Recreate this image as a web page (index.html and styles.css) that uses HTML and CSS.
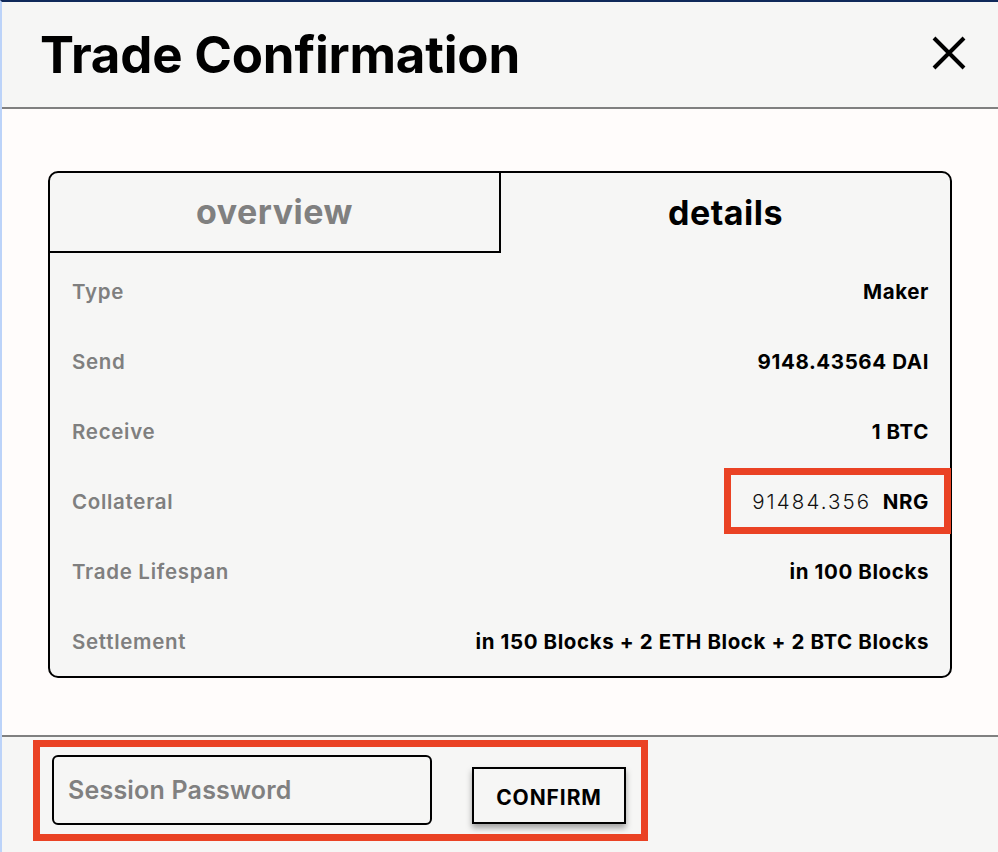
FILE: index.html
```html
<!DOCTYPE html>
<html lang="en">
<head>
<meta charset="utf-8">
<title>Trade Confirmation</title>
<link rel="stylesheet" href="styles.css">
</head>
<body>
<div class="modal">
  <header class="modal-header">
    <h1 class="title">Trade Confirmation</h1>
    <button class="close" aria-label="Close">
      <svg width="34" height="34" viewBox="0 0 34 34"><path d="M2 2 L32 32 M32 2 L2 32" stroke="#000" stroke-width="4" fill="none"/></svg>
    </button>
  </header>
  <main class="modal-body">
    <section class="card">
      <div class="tabs">
        <div class="tab inactive">overview</div>
        <div class="tab active">details</div>
      </div>
      <div class="rows">
        <div class="row"><span class="label">Type</span><span class="value">Maker</span></div>
        <div class="row"><span class="label">Send</span><span class="value">9148.43564 DAI</span></div>
        <div class="row"><span class="label">Receive</span><span class="value">1 BTC</span></div>
        <div class="row"><span class="label">Collateral</span><span class="value collateral"><span class="light">91484.356</span> NRG<span class="mark mark-collateral"></span></span></div>
        <div class="row"><span class="label">Trade Lifespan</span><span class="value">in 100 Blocks</span></div>
        <div class="row"><span class="label">Settlement</span><span class="value">in 150 Blocks + 2 ETH Block + 2 BTC Blocks</span></div>
      </div>
    </section>
  </main>
  <footer class="modal-footer">
    <div class="form">
      <input class="password" type="password" placeholder="Session Password">
      <button class="confirm">CONFIRM</button>
      <span class="mark mark-form"></span>
    </div>
  </footer>
</div>
</body>
</html>
```
FILE: styles.css
```css
* { box-sizing: border-box; }
html, body { margin: 0; padding: 0; }
body {
  width: 998px;
  height: 852px;
  overflow: hidden;
  font-family: "Inter", "Noto Sans", sans-serif;
  background: #fffcfb;
}
.modal {
  height: 852px;
  border-top: 2px solid #10295a;
  border-left: 2px solid #bcd3f9;
  display: flex;
  flex-direction: column;
}
.modal-header {
  height: 107px;
  flex: none;
  background: #f6f6f5;
  border-bottom: 2px solid #808080;
  display: flex;
  align-items: center;
  justify-content: space-between;
  padding: 0 32px 0 38px;
}
.title {
  margin: 0;
  font-size: 51px;
  font-weight: 700;
  color: #000;
  letter-spacing: -0.2px;
}
.close {
  background: none;
  border: 0;
  padding: 0;
  width: 34px;
  height: 34px;
  display: flex;
  margin-bottom: 3px;
}
.modal-body {
  flex: 1;
  background: #fffcfb;
  padding: 62px 46px 0 46px;
}
.card {
  border: 2px solid #000;
  border-radius: 10px;
  background: #f6f6f5;
}
.tabs {
  display: flex;
  height: 80px;
}
.tab {
  flex: 1;
  display: flex;
  align-items: center;
  justify-content: center;
  font-size: 34px;
  font-weight: 700;
  letter-spacing: 0.5px;
  padding-bottom: 2px;
}
.tab.inactive {
  color: #808080;
  border-right: 2px solid #000;
  border-bottom: 2px solid #000;
  border-top-left-radius: 8px;
}
.tab.active { color: #000; }
.rows { padding-top: 3px; }
.row {
  height: 70px;
  display: flex;
  align-items: center;
  justify-content: space-between;
  padding: 0 21px 0 22px;
  font-size: 20.5px;
  font-weight: 700;
  letter-spacing: 0.6px;
}
.label { color: #7f7f7f; font-weight: 600; letter-spacing: 0.7px; }
.value { color: #000; }
.collateral { position: relative; }
.light { font-weight: 300; color: #111; letter-spacing: 2.1px; margin-right: 6px; }
.mark {
  position: absolute;
  border: 7px solid #ea4224;
  pointer-events: none;
}
.mark-collateral {
  left: -28px;
  right: -22px;
  top: -21px;
  bottom: -20px;
}
.modal-footer {
  height: 117px;
  flex: none;
  background: #f6f6f5;
  border-top: 2px solid #808080;
  padding: 18px 0 0 50px;
}
.form {
  position: relative;
  display: flex;
  align-items: flex-start;
  width: 574px;
}
.password {
  width: 380px;
  height: 70px;
  border: 2px solid #000;
  border-radius: 6px;
  background: #f6f6f5;
  padding: 0 14px;
  font-family: inherit;
  font-size: 25px;
  font-weight: 600;
  letter-spacing: 0.2px;
  outline: none;
}
.password::placeholder { color: #808080; opacity: 1; }
.confirm {
  margin: 12px 0 0 40px;
  width: 155px;
  height: 57px;
  border: 2px solid #000;
  background: #f6f6f5;
  box-shadow: 0 4px 6px rgba(0,0,0,0.35);
  font-family: inherit;
  font-size: 21px;
  font-weight: 700;
  letter-spacing: 0.9px;
  color: #000;
  padding: 4px 0 0 0;
}
.mark-form {
  left: -19px;
  top: -15px;
  width: 615px;
  height: 101px;
}
```
